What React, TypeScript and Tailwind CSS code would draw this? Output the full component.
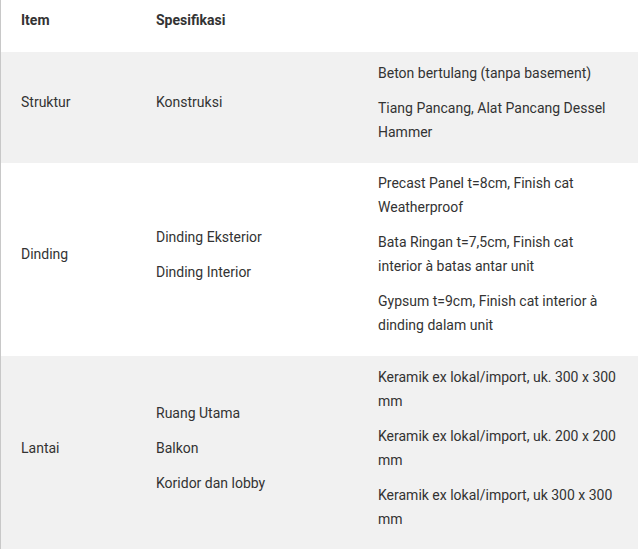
import React from "react";

type Row = { item: string; spec: string[]; detail: string[]; gray: boolean; h: string };

const rows: Row[] = [
  {
    item: "Struktur",
    spec: ["Konstruksi"],
    detail: ["Beton bertulang (tanpa basement)", "Tiang Pancang, Alat Pancang Dessel Hammer"],
    gray: true,
    h: "h-[111px]",
  },
  {
    item: "Dinding",
    spec: ["Dinding Eksterior", "Dinding Interior"],
    detail: [
      "Precast Panel t=8cm, Finish cat Weatherproof",
      "Bata Ringan t=7,5cm, Finish cat interior à batas antar unit",
      "Gypsum t=9cm, Finish cat interior à dinding dalam unit",
    ],
    gray: false,
    h: "h-[193px]",
  },
  {
    item: "Lantai",
    spec: ["Ruang Utama", "Balkon", "Koridor dan lobby"],
    detail: [
      "Keramik ex lokal/import, uk. 300 x 300 mm",
      "Keramik ex lokal/import, uk. 200 x 200 mm",
      "Keramik ex lokal/import, uk 300 x 300 mm",
    ],
    gray: true,
    h: "h-[194px]",
  },
];

function Paras({ items }: { items: string[] }) {
  return (
    <>
      {items.map((t, i) => (
        <p key={i} className="mb-[11px] leading-[24px]">
          {t}
        </p>
      ))}
    </>
  );
}

export default function App() {
  return (
    <div
      className="w-[638px] h-[549px] overflow-hidden bg-white border-l border-[#c8c8c8] text-[14px] text-[#333333]"
      style={{ fontFamily: "Roboto, 'Noto Sans', sans-serif" }}
    >
      <table className="w-[637px] border-collapse table-fixed">
        <colgroup>
          <col className="w-[135px]" />
          <col className="w-[222px]" />
          <col className="w-[280px]" />
        </colgroup>
        <thead>
          <tr className="h-[52px]">
            <th className="pl-5 pt-[8px] pb-[9px] text-left align-middle font-bold">
              <p className="mb-[11px] leading-[24px]">Item</p>
            </th>
            <th className="pl-5 pt-[8px] pb-[9px] text-left align-middle font-bold">
              <p className="mb-[11px] leading-[24px]">Spesifikasi</p>
            </th>
            <th className="pl-5 pt-[8px] pb-[9px] text-left align-middle"></th>
          </tr>
        </thead>
        <tbody>
          {rows.map((r, i) => (
            <tr key={i} className={`${r.h} ${r.gray ? "bg-[#f1f1f1]" : "bg-white"}`}>
              <td className="pl-5 pr-2 py-2 align-middle">
                <Paras items={[r.item]} />
              </td>
              <td className="pl-5 pr-2 py-2 align-middle">
                <Paras items={r.spec} />
              </td>
              <td className="pl-5 pr-[19px] py-2 align-middle">
                <Paras items={r.detail} />
              </td>
            </tr>
          ))}
        </tbody>
      </table>
    </div>
  );
}
